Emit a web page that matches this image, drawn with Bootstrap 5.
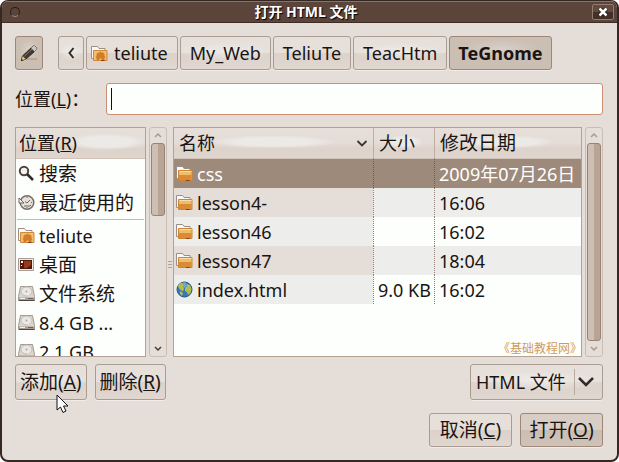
<!DOCTYPE html>
<html lang="zh-CN">
<head>
<meta charset="utf-8">
<meta name="viewport" content="width=device-width, initial-scale=1">
<title>打开 HTML 文件</title>
<link rel="stylesheet" href="https://cdn.jsdelivr.net/npm/bootstrap@5.3.0/dist/css/bootstrap.min.css">
<style>
  body { font-family: "Noto Sans", "Noto Sans CJK SC", sans-serif; font-size: 18px; line-height: 24px; color: #1a1412; background: #fff; }
  .dialog { background: #e5ddd7; border: 2px solid #352722; border-top-width: 1px; border-radius: 8px; height: 100vh; min-height: 400px; overflow: hidden; }
  .titlebar { height: 22px; background: #5b443a; border-top: 1px solid #8a7468; border-bottom: 1px solid #3d2c25; padding: 0 3px 0 8px; color: #fff; }
  .titlebar h1 { font-size: 14px; line-height: 18px; font-weight: 700; text-shadow: 1px 1px 1px #000; }
  .dot { width: 10px; height: 10px; border: 1px solid #291c17; border-bottom-color: #a08c80; border-radius: 50%; }
  .close-btn { width: 22px; height: 16px; border: 1px solid #947d70; background: linear-gradient(#634b41 50%, #453028 50%); border-radius: 2px; }
  .content { padding: 13px 14px 13px 13px; min-height: 0; }
  .gbtn { --bs-btn-color: #1a1412; --bs-btn-hover-color: #1a1412; --bs-btn-border-color: #a99c93; --bs-btn-hover-border-color: #a08c80; --bs-btn-padding-x: 9px; --bs-btn-padding-y: 0; --bs-btn-border-radius: 3px; --bs-btn-font-size: 18px; --bs-btn-line-height: 24px;
    height: 34px; white-space: nowrap; box-shadow: 0 1px 0 #f1ece8; background: linear-gradient(#e6dfda 50%, #dcd2ca 50%, #e0d7d0); }
  .gbtn.soft { background: radial-gradient(ellipse 55% 30% at 50% 45%, #ecebe8, transparent), linear-gradient(#e6dfda 50%, #dcd2ca 50%, #e0d7d0); }
  .gbtn.pressed { background: radial-gradient(ellipse 40% 35% at 50% 38%, #d8cfc8, transparent), #cbbeb3; border-color: #9c8779; }
  .gbtn.main { background: linear-gradient(#d9cec6 50%, #cabdb2 50%, #cfc2b8); border-color: #9c8779; }
  .gbtn.tall { height: 36px; padding: 0 4px; }
  .gbtn.tall.cj { font-size: 19px; }
  .gbtn.wide { width: 83px; padding: 0; font-size: 19px; }
  .gbtn.back { margin-left: 13px; }
  .gbtn.home-dir { padding: 0 9px 0 4px; gap: 6px; }
  .crumbs { gap: 2px; }
  .locrow { margin: 13px 0 12px; }
  .locrow label { width: 91px; }
  .loc { height: 32px; border: 1px solid #c98e74; border-radius: 3px; padding: 0 8px; font-size: 18px; background: linear-gradient(#111, #111) 4px 4px / 1px 22px no-repeat #fdfffc; }
  .panes { min-height: 0; }
  .pane { border: 1px solid #b3a294; background: #fdfffc; overflow: hidden; min-height: 0; }
  .side { width: 131px; }
  .head { height: 31px; padding: 0 3px; border-bottom: 1px solid #cfc1b6; background: radial-gradient(ellipse 32% 28% at 70% 46%, #eceae7 60%, transparent), linear-gradient(#e6dfda, #e4dcd6 50%, #ddd3cb 70%, #dfd6cf); }
  .place { height: 29px; padding: 0 2px; gap: 4px; color: inherit; text-decoration: none; white-space: nowrap; }
  .cj { font-size: 19px; }
  .rule { border-top: 1px solid #c5bbb3; margin: 2px 1px 1px; }
  .ico { width: 17px; height: 17px; flex: none; }
  .vbar { width: 18px; border: 1px solid #cbbdb2; border-radius: 3px; background: #e5ddd7; padding: 0 1px; margin-left: 3px; }
  .vbar svg { height: 15px; width: 14px; flex: none; }
  .thumb { border: 1px solid #978274; border-radius: 3px; background: linear-gradient(90deg, #cdbfb4 50%, #b8a596 50%); }
  .thumb.short { height: 73px; }
  .grip { width: 6px; }
  .grip svg { width: 4px; height: 8px; margin-top: 45px; }
  .files { table-layout: fixed; width: 100%; border-collapse: separate; border-spacing: 0; }
  .files th { height: 31px; padding: 0 5px; font-weight: 400; border-bottom: 1px solid #cfc1b6; background: radial-gradient(ellipse 32% 22% at 50% 46%, #eceae7 60%, transparent), linear-gradient(#e6dfda, #e4dcd6 50%, #ddd3cb 70%, #dfd6cf); white-space: nowrap; }
  .files th + th { border-left: 1px solid #bcaea3; }
  .files td { height: 29px; padding: 0 0 0 4px; white-space: nowrap; }
  .files td + td { border-left: 1px dotted #8f8179; }
  .files td:first-child { padding-left: 2px; background: #e5ddd7; }
  .files tr:nth-child(even) td:not(:first-child) { background: #edeeeb; }
  .files tr:nth-child(odd) td:first-child { background: #edeeeb; }
  .files tbody tr.chosen td, .files tbody tr.chosen td:first-child { background: #9e8a7b; color: #fff; border-left-color: #6f5c50; }
  .c-size { width: 61px; }
  .c-date { width: 147px; }
  .credit { font: 12px/14px "Noto Sans CJK SC", sans-serif; color: #d19a5c; right: -1px; bottom: 1px; }
  .kind { width: 133px; }
  .kind select { appearance: none; width: 100%; color: inherit; border: 1px solid #a99c93; border-radius: 3px; font-size: 18px; padding: 0 30px 0 5px !important; text-align: left; }
  .kind svg { right: 5px; top: 4px; width: 24px; height: 28px; pointer-events: none; }
  .pointer { left: 41px; top: 30px; width: 13px; height: 20px; pointer-events: none; z-index: 2; }
  .tools { margin-top: 7px; gap: 8px; }
  .actions { margin-top: 13px; gap: 8px; }
</style>
<script src="https://cdn.jsdelivr.net/npm/bootstrap@5.3.0/dist/js/bootstrap.bundle.min.js"></script>
</head>
<body>
<svg class="d-none" aria-hidden="true">
  <symbol id="folder" viewBox="0 0 17 17">
    <path d="M.5 13.500v-12h6l1.500 2h6v10z" fill="#fbfaf8" stroke="#9a8f88"/>
    <path d="M2.500 5.500h13.500v10H2.500z" fill="#efbd68" stroke="#cf8433"/>
    <path d="M3 10h12.500v5H3z" fill="#db8b35"/><path d="M3.500 6.500h12" stroke="#fae0a6"/><path d="M10 15.500h3.500" stroke="#8c3d14"/>
  </symbol>
  <symbol id="home" viewBox="0 0 17 17">
    <path d="M.5 13.500v-12h6l1.500 2h6v10z" fill="#fbfaf8" stroke="#9a8f88"/>
    <path d="M2.500 5.500h13.500v10H2.500z" fill="#f0bf73" stroke="#d08838"/>
    <path d="M4.500 12l1-1V9L7 7.500h1.500l1-1 1 1H12L13.500 9v2l1 1-1 1v2H11l-1-1.500H9L8 15H5.500v-2z" fill="#cf7d28"/>
    <path d="M10 15.500h3.500" stroke="#8c3d14"/>
  </symbol>
  <symbol id="disk" viewBox="0 0 17 17">
    <path d="M2.500 1.500h12l2 10v4H.5v-4z" fill="#dcd6d0" stroke="#a19992"/>
    <path d="M1 12.500h15V15H1z" fill="#a79e97"/><path d="M1 15.500h15.500" stroke="#4f4742"/>
    <ellipse cx="8.500" cy="6.500" rx="5.500" ry="4.500" fill="#ebe7e2" stroke="#c2bab3"/><path d="M8 7l3 4M2 13.500h5" stroke="#f4f1ee"/><path d="M10 13.500h5" stroke="#6a625c"/><circle cx="8.500" cy="6.500" r="1" fill="#b0a79f"/>
  </symbol>
  <symbol id="globe" viewBox="0 0 17 17">
    <circle cx="8.500" cy="8.500" r="7.500" fill="#3577bd" stroke="#28508a"/>
    <path d="M5 2l4-.5-1 2 1 1-2 1 1 2-1 3-3-2-2-3C2 4 3 3 5 2zM11 3l3 1 1.500 4-1 4-2.500 2-1-3-2-1V7l2-2zM4 10l3 2-1 3-2-2z" fill="#b2bd4a"/>
    <path d="M7 2l3-.5 1 3-3 3-1-2z" fill="#68a9da"/>
  </symbol>
  <symbol id="up" viewBox="0 0 14 15"><path d="M4 9l3-3 3 3" fill="none" stroke="#a99a8e" stroke-width="1.500"/></symbol>
  <symbol id="down" viewBox="0 0 14 15"><path d="M4 6l3 3 3-3" fill="none" stroke="currentColor" stroke-width="1.500"/></symbol>
</svg>

<main class="dialog d-flex flex-column">
  <header class="titlebar d-flex align-items-center justify-content-between flex-shrink-0">
    <span class="dot"></span>
    <h1 class="m-0">打开 HTML 文件</h1>
    <button type="button" class="close-btn p-0 d-flex align-items-center justify-content-center" aria-label="关闭">
      <svg width="10" height="10" viewBox="0 0 10 10"><path d="M1.500 1.500l7 7M8.500 1.500l-7 7" stroke="#1b120f" stroke-width="4"/><path d="M1.500 1.500l7 7M8.500 1.500l-7 7" stroke="#fff" stroke-width="2.500"/></svg>
    </button>
  </header>

  <div class="content d-flex flex-column flex-grow-1">
    <nav class="crumbs d-flex flex-shrink-0" aria-label="路径">
      <button type="button" class="btn gbtn pressed px-1" aria-label="输入文件名">
        <svg class="d-block" width="18" height="18" viewBox="0 0 18 18"><path d="M7 15h10" stroke="#b5a08d" stroke-width="1.500"/><path d="M1.500 16.500l1-4.500L11 4l3.500 3.500L6 15z" fill="#453b35" stroke="#302721"/><path d="M1.500 16.500l1-4.500 3.500 3.200z" fill="#ecd98a" stroke="#6b5a3a" stroke-width=".6"/><path d="M1 17l.7-2 1.300 1.300z" fill="#111"/><path d="M4.500 12L12 5" stroke="#85786f"/><path d="M11 4l2-2 1.500-.5L17 4l-.5 1.500-2 2z" fill="#c9c5c1" stroke="#7f7973"/></svg>
      </button>
      <button type="button" class="btn gbtn soft back px-1" aria-label="上一级">
        <svg class="d-block" width="16" height="16" viewBox="0 0 16 16"><path d="M10.500 3L6.500 8l4 5" fill="none" stroke="#332a26" stroke-width="2"/></svg>
      </button>
      <button type="button" class="btn gbtn home-dir d-flex align-items-center"><svg class="ico"><use href="#home"/></svg>teliute</button>
      <button type="button" class="btn gbtn soft">My_Web</button>
      <button type="button" class="btn gbtn">TeliuTe</button>
      <button type="button" class="btn gbtn soft">TeacHtm</button>
      <button type="button" class="btn gbtn pressed fw-bold px-2">TeGnome</button>
    </nav>

    <div class="locrow d-flex align-items-center flex-shrink-0">
      <label for="loc" class="text-nowrap">位置(<u>L</u>)：</label>
      <input id="loc" type="text" class="loc flex-grow-1">
    </div>

    <div class="panes d-flex flex-grow-1">
      <section class="pane side flex-shrink-0" aria-label="位置">
        <div class="head d-flex align-items-center"><span>位置(<u>R</u>)</span></div>
        <a href="#" class="place d-flex align-items-center cj"><svg class="ico" viewBox="0 0 17 17"><circle cx="6" cy="6" r="4.200" fill="#f3f2ee" stroke="#4e4541" stroke-width="2"/><path d="M9 9l6 6" stroke="#332925" stroke-width="2.500"/></svg>搜索</a>
        <a href="#" class="place d-flex align-items-center cj"><svg class="ico" viewBox="0 0 17 17"><circle cx="9" cy="8.500" r="6.800" fill="#e5e0da" stroke="#756c65" stroke-width="1.500"/><path d="M9 3v1M9 13v1M14 8.500h-1M9 9l3-3M9 9L7 7.500M6 12h6M12 12l1-1" stroke="#726861"/><path d="M1 4v5h5z" fill="#f8f7f4" stroke="#6b625d"/></svg>最近使用的</a>
        <div class="rule"></div>
        <a href="#" class="place d-flex align-items-center"><svg class="ico"><use href="#home"/></svg>teliute</a>
        <a href="#" class="place d-flex align-items-center cj"><svg class="ico" viewBox="0 0 17 17"><path d="M.5 2.500h15v12H.5z" fill="#f0ebe7" stroke="#a69d96"/><path d="M2 4h12v9H2z" fill="#4f1a0d"/><path d="M6 5h7v4l-4 3H6z" fill="#943c1a"/><path d="M3 5h2v2H3zM3 9h1v1H3z" fill="#fff"/></svg>桌面</a>
        <a href="#" class="place d-flex align-items-center cj"><svg class="ico"><use href="#disk"/></svg>文件系统</a>
        <a href="#" class="place d-flex align-items-center"><svg class="ico"><use href="#disk"/></svg>8.4 GB ...</a>
        <a href="#" class="place d-flex align-items-center"><svg class="ico"><use href="#disk"/></svg>2.1 GB ...</a>
      </section>
      <div class="vbar d-flex flex-column flex-shrink-0">
        <svg><use href="#up"/></svg>
        <div class="thumb short"></div>
        <svg class="mt-auto" color="#4c3c34"><use href="#down"/></svg>
      </div>
      <div class="grip d-flex align-items-center justify-content-center flex-shrink-0"><svg viewBox="0 0 4 8"><path d="M0 .5h4M0 3.500h4M0 6.500h4" stroke="#b3a294"/></svg></div>
      <section class="pane flex-grow-1 position-relative">
        <table class="files">
          <colgroup><col><col class="c-size"><col class="c-date"></colgroup>
          <thead><tr>
            <th scope="col"><div class="d-flex align-items-center justify-content-between">名称<svg width="12" height="10" viewBox="0 0 12 10"><path d="M1.500 3L6 7.500 10.500 3" fill="none" stroke="#40342e" stroke-width="1.800"/></svg></div></th>
            <th scope="col">大小</th><th scope="col" class="cj">修改日期</th>
          </tr></thead>
          <tbody>
            <tr class="chosen"><td><div class="d-flex align-items-center gap-1"><svg class="ico"><use href="#folder"/></svg>css</div></td><td></td><td>2009年07月26日</td></tr>
            <tr><td><div class="d-flex align-items-center gap-1"><svg class="ico"><use href="#folder"/></svg>lesson4-</div></td><td></td><td>16:06</td></tr>
            <tr><td><div class="d-flex align-items-center gap-1"><svg class="ico"><use href="#folder"/></svg>lesson46</div></td><td></td><td>16:02</td></tr>
            <tr><td><div class="d-flex align-items-center gap-1"><svg class="ico"><use href="#folder"/></svg>lesson47</div></td><td></td><td>18:04</td></tr>
            <tr><td><div class="d-flex align-items-center gap-1"><svg class="ico"><use href="#globe"/></svg>index.html</div></td><td>9.0 KB</td><td>16:02</td></tr>
          </tbody>
        </table>
        <span class="credit position-absolute">《基础教程网》</span>
      </section>
      <div class="vbar d-flex flex-column flex-shrink-0">
        <svg><use href="#up"/></svg>
        <div class="thumb flex-grow-1"></div>
        <svg color="#a99a8e"><use href="#down"/></svg>
      </div>
    </div>

    <div class="tools d-flex flex-shrink-0 position-relative">
      <button type="button" class="btn gbtn soft tall cj">添加(<u>A</u>)</button>
      <button type="button" class="btn gbtn tall cj">删除(<u>R</u>)</button>
      <div class="kind position-relative ms-auto">
        <select class="gbtn tall soft" aria-label="文件类型"><option>HTML 文件</option></select>
        <svg class="position-absolute" viewBox="0 0 24 28"><path d="M.5 1v26" stroke="#b9aa9e"/><path d="M5 10l7 7 7-7" fill="none" stroke="#352a25" stroke-width="2.500"/></svg>
      </div>
      <svg class="pointer position-absolute" viewBox="0 0 13 20"><path d="M1 1v15l3.500-3 2.500 5.500 3-1.500-2.500-5H12z" fill="#fff" stroke="#111"/></svg>
    </div>

    <div class="actions d-flex justify-content-end flex-shrink-0">
      <button type="button" class="btn gbtn wide">取消(<u>C</u>)</button>
      <button type="button" class="btn gbtn wide main">打开(<u>O</u>)</button>
    </div>
  </div>
</main>
</body>
</html>
